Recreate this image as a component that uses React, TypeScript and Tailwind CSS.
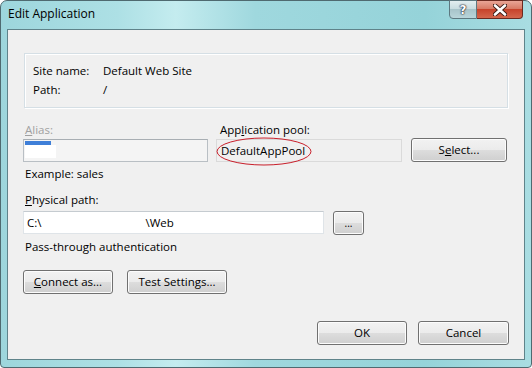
import React from 'react';

const btn =
  'flex items-center justify-center rounded-[3px] border border-[#707070] bg-[linear-gradient(#f2f2f2_0%,#ebebeb_50%,#dddddd_50%,#cfcfcf_100%)] shadow-[inset_0_0_0_1px_#fcfcfc] text-black';

const App: React.FC = () => {
  return (
    <div className="w-[532px] h-[368px] bg-white font-['Open_Sans',_sans-serif] text-[11.5px] leading-[16px] text-black">
      <div className="flex flex-col w-full h-full rounded-t-[7px] rounded-b-[4px] border border-[#4f6a70] bg-[linear-gradient(90deg,#9dd6dc_0%,#ade0e5_22%,#c4ecef_33%,#9fd8de_48%,#95d3d9_80%,#a9dde2_100%)]">
        {/* Title bar */}
        <div className="flex h-[28px] items-start">
          <div className="pl-[7px] pt-[5px] text-[12px]">Edit Application</div>
          <div className="ml-auto mr-[8px] flex h-[19px] -mt-px">
            <div className="flex w-[28px] items-center justify-center rounded-bl-[4px] border border-[#5d7880] bg-[linear-gradient(#e3eef0_0%,#c9dde1_45%,#a8c4ca_50%,#b9d5da_100%)]">
              <span className="font-['DejaVu_Sans',_sans-serif] font-bold text-[12px] text-white [text-shadow:0_0_1px_#223,0_0_1px_#223,0_0_2px_#223]">?</span>
            </div>
            <div className="flex w-[46px] items-center justify-center rounded-br-[4px] border border-l-0 border-[#6b2a20] bg-[linear-gradient(#e9a596_0%,#d77b66_45%,#c7432b_50%,#d4664c_100%)]">
              <svg width="14" height="12" viewBox="0 0 14 12">
                <path d="M2 1.5 L12 10.5 M12 1.5 L2 10.5" stroke="#3a1a14" strokeWidth="4.4" strokeLinecap="round" />
                <path d="M2 1.5 L12 10.5 M12 1.5 L2 10.5" stroke="#ffffff" strokeWidth="2.6" strokeLinecap="round" />
              </svg>
            </div>
          </div>
        </div>

        {/* Client area */}
        <div className="mx-[6px] mb-[7px] flex-1 border border-[#5f838a] bg-[#f0f0f0] flex flex-col">
          {/* Site info */}
          <div className="mt-[23px] ml-[16px] w-[484px] h-[55px] border border-[#d5dfe5] shadow-[inset_1px_1px_0_#ffffff,1px_1px_0_#ffffff] pl-[8px] pt-[9px]">
            <div className="flex h-[19px]">
              <span className="w-[70px]">Site name:</span>
              <span>Default Web Site</span>
            </div>
            <div className="flex h-[19px]">
              <span className="w-[70px]">Path:</span>
              <span>/</span>
            </div>
          </div>

          {/* Alias / app pool */}
          <div className="mt-[14px] ml-[15px] flex items-end">
            <div className="w-[185px] flex flex-col">
              <span className="pl-[2px] text-[#a0a0a0]">
                <u>A</u>lias:
              </span>
              <div className="mt-px h-[23px] border border-[#b9bfc4] border-t-[#a8aeb3] bg-[#f4f4f4] pl-[1px] pt-[1px]">
                <div className="w-[26px] h-[4px] bg-[#3f7fd8]" />
                <div className="w-[31px] h-[13px] bg-white" />
              </div>
            </div>
            <div className="ml-[8px] w-[186px] flex flex-col">
              <span className="pl-[4px]">
                App<u>l</u>ication pool:
              </span>
              <div className="relative mt-px h-[23px] border border-[#dadada] bg-[#f0f0f0] pl-[4px] flex items-center">
                DefaultAppPool
                <svg className="absolute left-[-1px] top-[-3px]" width="96" height="29" viewBox="0 0 96 29">
                  <ellipse cx="48" cy="14.5" rx="47" ry="13.5" fill="none" stroke="#c81e2a" strokeWidth="1" />
                </svg>
              </div>
            </div>
            <button className={`${btn} ml-[9px] w-[96px] h-[24px]`}>
              S<u>e</u>lect...
            </button>
          </div>

          <div className="mt-[4px] ml-[17px]">Example: sales</div>

          <div className="mt-[10px] ml-[17px]">
            <u>P</u>hysical path:
          </div>
          <div className="mt-[3px] ml-[15px] flex items-start h-[24px]">
            <div className="w-[301px] h-[23px] border border-[#dfe4e8] border-t-[#c5cbd0] bg-white pl-[3px] flex items-center">
              <span>C:\</span>
              <span className="ml-[104px]">\Web</span>
            </div>
            <button className={`${btn} ml-[9px] w-[31px] h-[24px] text-[10px] text-[#555]`}>
              ...
            </button>
          </div>

          <div className="mt-[4px] ml-[17px]">Pass-through authentication</div>

          <div className="mt-[15px] ml-[15px] flex gap-[14px]">
            <button className={`${btn} w-[90px] h-[24px]`}>
              <u>C</u>onnect as...
            </button>
            <button className={`${btn} w-[100px] h-[24px]`}>
              Test Settin<u>g</u>s...
            </button>
          </div>

          <div className="mt-[27px] mr-[15px] flex justify-end gap-[11px]">
            <button className={`${btn} w-[90px] h-[24px] border-[#3c7fb1] shadow-[inset_0_0_0_1px_#b8e4fb]`}>OK</button>
            <button className={`${btn} w-[91px] h-[24px]`}>Cancel</button>
          </div>
        </div>
      </div>
    </div>
  );
};

export default App;
